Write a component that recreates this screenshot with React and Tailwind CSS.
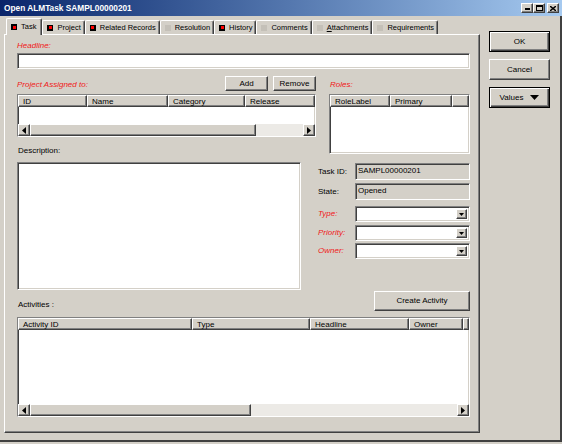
import React from "react";

const sunken =
  "border border-t-[#808080] border-l-[#808080] border-r-white border-b-white shadow-[inset_1px_1px_0_#404040,inset_-1px_-1px_0_#d4d0c8]";
const raised =
  "border border-t-white border-l-white border-r-[#404040] border-b-[#404040] shadow-[inset_-1px_-1px_0_#808080]";
const defRaised =
  "border border-black shadow-[inset_1px_1px_0_#fff,inset_-1px_-1px_0_#404040,inset_-2px_-2px_0_#808080]";

const tabs = [
  { label: "Task", on: true, active: true },
  { label: "Project", on: true },
  { label: "Related Records", on: true },
  { label: "Resolution", on: false },
  { label: "History", on: true },
  { label: "Comments", on: false },
  { label: "Attachments", on: false, u: true },
  { label: "Requirements", on: false },
];

function Arrow({ dir }) {
  return (
    <svg width="4" height="7" viewBox="0 0 4 7">
      {dir === "left" ? <polygon points="4,0 4,7 0,3.5" fill="#000" /> : <polygon points="0,0 0,7 4,3.5" fill="#000" />}
    </svg>
  );
}

function Down({ w = 7, h = 4 }) {
  return (
    <svg width={w} height={h} viewBox={`0 0 ${w} ${h}`}>
      <polygon points={`0,0 ${w},0 ${w / 2},${h}`} fill="#000" />
    </svg>
  );
}

function Scroll({ thumb }) {
  return (
    <div className="flex h-[12px] bg-[#eceae6]">
      <div className={`w-[12px] h-[12px] bg-[#d4d0c8] flex items-center justify-center ${raised}`}>
        <Arrow dir="left" />
      </div>
      <div className={`h-[12px] bg-[#d4d0c8] ${raised}`} style={{ width: thumb }} />
      <div className="flex-1" />
      <div className={`w-[12px] h-[12px] bg-[#d4d0c8] flex items-center justify-center ${raised}`}>
        <Arrow dir="right" />
      </div>
    </div>
  );
}

function ListBox({ cols, h, filler, thumb, className = "" }) {
  return (
    <div className={`bg-white flex flex-col ${sunken} ${className}`} style={{ height: h }}>
      <div className="flex h-[12px] shrink-0 overflow-hidden">
        {cols.map((c, i) => (
          <div
            key={c.label}
            className={`h-[12px] bg-[#d4d0c8] pl-[4px] leading-[11px] whitespace-nowrap shrink-0 ${raised} ${
              !filler && i === cols.length - 1 ? "flex-1" : ""
            }`}
            style={!filler && i === cols.length - 1 ? undefined : { width: c.w }}
          >
            {c.label}
          </div>
        ))}
        {filler && <div className={`flex-1 h-[12px] bg-[#d4d0c8] ${raised}`} />}
      </div>
      <div className="flex-1" />
      {thumb && <Scroll thumb={thumb} />}
    </div>
  );
}

function Label({ children, red, className = "" }) {
  return (
    <span className={`leading-[10px] ${red ? "text-[#f01818] italic" : ""} ${className}`}>{children}</span>
  );
}

function Combo() {
  return (
    <div className={`w-[115px] h-[16px] bg-white flex justify-end p-[2px] ${sunken}`}>
      <div className={`w-[11px] h-full bg-[#d4d0c8] flex items-center justify-center ${raised}`}>
        <Down w={5} h={3} />
      </div>
    </div>
  );
}

function Btn({ children, className = "", def }) {
  return (
    <div className={`bg-[#d4d0c8] flex items-center justify-center ${def ? defRaised : raised} ${className}`}>
      {children}
    </div>
  );
}

export default function App() {
  return (
    <div className="w-[562px] h-[444px] bg-[#d4d0c8] overflow-hidden font-['Liberation_Sans',Arial,sans-serif] text-[8px] text-black">
      {/* title bar */}
      <div className="h-[16px] flex items-center justify-between pl-[4px] pr-[3px] bg-linear-to-r from-[#0a246a] to-[#a6caf0]">
        <span className="text-white font-bold text-[8.3px] leading-[10px]">Open ALMTask SAMPL00000201</span>
        <div className="flex items-center">
          <div className={`w-[12px] h-[10px] bg-[#d4d0c8] flex items-end justify-center pb-[2px] ${raised}`}>
            <div className="w-[5px] h-[2px] bg-black" />
          </div>
          <div className={`w-[12px] h-[10px] bg-[#d4d0c8] flex items-center justify-center ${raised}`}>
            <div className="w-[7px] h-[6px] border border-black border-t-2" />
          </div>
          <div className={`ml-[2px] w-[12px] h-[10px] bg-[#d4d0c8] flex items-center justify-center ${raised}`}>
            <svg width="6" height="5" viewBox="0 0 6 5">
              <path d="M0 0L6 5M6 0L0 5" stroke="#000" strokeWidth="1.4" />
            </svg>
          </div>
        </div>
      </div>

      <div className="flex h-[426px] border-r-2 border-b-2 border-r-[#404040] border-b-[#404040]">
        {/* left: tabs + panel */}
        <div className="pl-[4px] pt-[2px] w-[484px]">
          <div className="flex items-end h-[16px] pl-[2px]">
            {tabs.map((t) => (
              <div
                key={t.label}
                className={`flex items-center shrink-0 pl-[4px] pr-[3px] text-[7.5px] border-t border-l border-t-white border-l-white border-r border-r-[#404040] shadow-[inset_-1px_0_0_#808080] bg-[#d4d0c8] rounded-t-[2px] ${
                  t.active ? "h-[17px] mb-[-1px] relative z-10 pr-[5px]" : "h-[14px]"
                }`}
              >
                {t.on ? (
                  <div className="w-[6px] h-[6px] shrink-0 bg-black flex items-center justify-center">
                    <div className="w-[3px] h-[3px] bg-[#ff0000]" />
                  </div>
                ) : (
                  <div className="w-[6px] h-[6px] shrink-0 bg-[#c4c0b8]" />
                )}
                <span className="ml-[4px] whitespace-nowrap leading-[10px]">
                  {t.u ? (
                    <>
                      <u>A</u>ttachments
                    </>
                  ) : (
                    t.label
                  )}
                </span>
              </div>
            ))}
          </div>

          <div className={`w-[476px] h-[399px] bg-[#d4d0c8] pl-[12px] pr-[9px] pt-[6px] flex flex-col ${raised}`}>
            <Label red>Headline:</Label>
            <div className={`mt-[2px] h-[16px] bg-white ${sunken}`} />

            <div className="flex mt-[7px]">
              {/* left column */}
              <div className="w-[299px] flex flex-col">
                <div className="flex items-end justify-between h-[15px]">
                  <Label red className="pb-[1px]">Project Assigned to:</Label>
                  <div className="flex gap-[5px]">
                    <Btn className="w-[43px] h-[15px]">Add</Btn>
                    <Btn className="w-[43px] h-[15px]">Remove</Btn>
                  </div>
                </div>
                <ListBox
                  className="mt-[3px] w-[299px]"
                  h={43}
                  thumb={226}
                  cols={[
                    { label: "ID", w: 69 },
                    { label: "Name", w: 81 },
                    { label: "Category", w: 77 },
                    { label: "Release", w: 70 },
                  ]}
                />
                <Label className="mt-[9px] ml-[1px]">Description:</Label>
                <div className={`mt-[6px] w-[284px] h-[128px] bg-white ${sunken}`} />
              </div>

              {/* right column */}
              <div className="w-[152px] ml-[2px] flex flex-col">
                <div className="h-[15px] flex items-end pl-[12px]">
                  <Label red className="pb-[1px]">Roles:</Label>
                </div>
                <ListBox
                  className="mt-[3px] ml-[11px] w-[141px]"
                  h={60}
                  filler
                  cols={[
                    { label: "RoleLabel", w: 60 },
                    { label: "Primary", w: 62 },
                  ]}
                />
                <div className="flex items-center mt-[9px]">
                  <Label className="w-[37px]">Task ID:</Label>
                  <div className={`w-[115px] h-[17px] bg-[#d4d0c8] pl-[2px] pt-[2px] leading-[10px] ${sunken}`}>SAMPL00000201</div>
                </div>
                <div className="flex items-center mt-[3px]">
                  <Label className="w-[37px]">State:</Label>
                  <div className={`w-[115px] h-[17px] bg-[#d4d0c8] pl-[2px] pt-[2px] leading-[10px] ${sunken}`}>Opened</div>
                </div>
                <div className="flex items-center mt-[6px]">
                  <Label red className="w-[37px]">Type:</Label>
                  <Combo />
                </div>
                <div className="flex items-center mt-[3px]">
                  <Label red className="w-[37px]">Priority:</Label>
                  <Combo />
                </div>
                <div className="flex items-center mt-[2px]">
                  <Label red className="w-[37px]">Owner:</Label>
                  <Combo />
                </div>
              </div>
            </div>

            <div className="flex items-end justify-between mt-[1px]">
              <Label className="ml-[1px] pb-[1px]">Activities :</Label>
              <Btn className="w-[96px] h-[20px]">Create Activity</Btn>
            </div>
            <ListBox
              className="mt-[6px] w-[453px]"
              h={100}
              filler
              thumb={221}
              cols={[
                { label: "Activity ID", w: 174 },
                { label: "Type", w: 118 },
                { label: "Headline", w: 99 },
                { label: "Owner", w: 54 },
              ]}
            />
          </div>
        </div>

        {/* right buttons */}
        <div className="pl-[5px] pt-[15px] flex flex-col gap-[7px]">
          <Btn def className="w-[61px] h-[21px]">OK</Btn>
          <Btn className="w-[61px] h-[21px]">Cancel</Btn>
          <Btn def className="w-[61px] h-[21px] gap-[7px]">
            <span>Values</span>
            <Down w={9} h={5} />
          </Btn>
        </div>
      </div>
    </div>
  );
}
